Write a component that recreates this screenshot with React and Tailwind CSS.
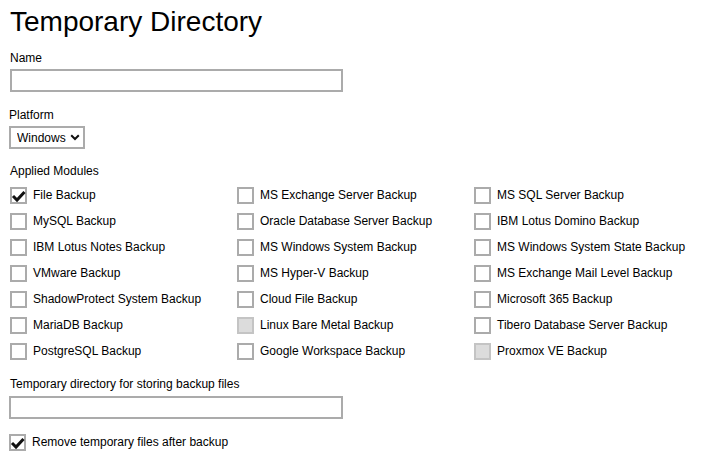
import React, { useState } from 'react';

const modules = [
  ['File Backup', true, false], ['MS Exchange Server Backup', false, false], ['MS SQL Server Backup', false, false],
  ['MySQL Backup', false, false], ['Oracle Database Server Backup', false, false], ['IBM Lotus Domino Backup', false, false],
  ['IBM Lotus Notes Backup', false, false], ['MS Windows System Backup', false, false], ['MS Windows System State Backup', false, false],
  ['VMware Backup', false, false], ['MS Hyper-V Backup', false, false], ['MS Exchange Mail Level Backup', false, false],
  ['ShadowProtect System Backup', false, false], ['Cloud File Backup', false, false], ['Microsoft 365 Backup', false, false],
  ['MariaDB Backup', false, false], ['Linux Bare Metal Backup', false, true], ['Tibero Database Server Backup', false, false],
  ['PostgreSQL Backup', false, false], ['Google Workspace Backup', false, false], ['Proxmox VE Backup', false, true],
];

const Check = ({ checked, disabled }) => (
  <span
    className={
      'flex h-[17px] w-[17px] shrink-0 items-center justify-center border-2 ' +
      (disabled ? 'border-[#c4c4c4] bg-[#dcdcdc]' : 'border-[#ababab] bg-white')
    }
  >
    {checked && (
      <svg width="13" height="13" viewBox="0 0 13 13" className="overflow-visible">
        <path d="M1 7 L5 11 L12.5 3" fill="none" stroke="#111" strokeWidth="3" />
      </svg>
    )}
  </span>
);

const Row = ({ label, checked, disabled }) => (
  <label className="flex h-[26px] items-center gap-[6px]">
    <Check checked={checked} disabled={disabled} />
    <span className="leading-4">{label}</span>
  </label>
);

const App = () => {
  const [name, setName] = useState('');
  const [dir, setDir] = useState('');

  return (
    <div className="min-h-[465px] w-[720px] bg-white px-[10px] pt-[6px] text-[12px] text-black" style={{ fontFamily: '"Liberation Sans", Arial, sans-serif' }}>
      <h1 className="text-[28px] leading-8">Temporary Directory</h1>

      <div className="mt-[12px] leading-4">Name</div>
      <input
        value={name}
        onChange={e => setName(e.target.value)}
        className="mt-[3px] block h-[23px] w-[333px] border-2 border-[#ababab] px-1 outline-none"
      />

      <div className="mt-[15px] -ml-px leading-4">Platform</div>
      <div className="relative mt-[3px] -ml-px w-[76px]">
        <select className="block h-[23px] w-full appearance-none border-2 border-[#ababab] bg-white pl-[6px] text-[12px] outline-none">
          <option>Windows</option>
          <option>Linux</option>
        </select>
        <svg className="pointer-events-none absolute right-[5px] top-[8px]" width="10" height="7" viewBox="0 0 10 7">
          <path d="M1.2 1.2 L5 5 L8.8 1.2" fill="none" stroke="#111" strokeWidth="2" />
        </svg>
      </div>

      <div className="mt-[14px] leading-4">Applied Modules</div>
      <div className="mt-[3px] grid grid-cols-[227px_237px_1fr]">
        {modules.map(([label, checked, disabled]) => (
          <Row key={label} label={label} checked={checked} disabled={disabled} />
        ))}
      </div>

      <div className="mt-[12px] leading-4">Temporary directory for storing backup files</div>
      <input
        value={dir}
        onChange={e => setDir(e.target.value)}
        className="mt-[4px] -ml-px block h-[23px] w-[334px] border-2 border-[#ababab] px-1 outline-none"
      />

      <div className="mt-[10px] -ml-px">
        <Row label="Remove temporary files after backup" checked />
      </div>
    </div>
  );
};

export default App;
